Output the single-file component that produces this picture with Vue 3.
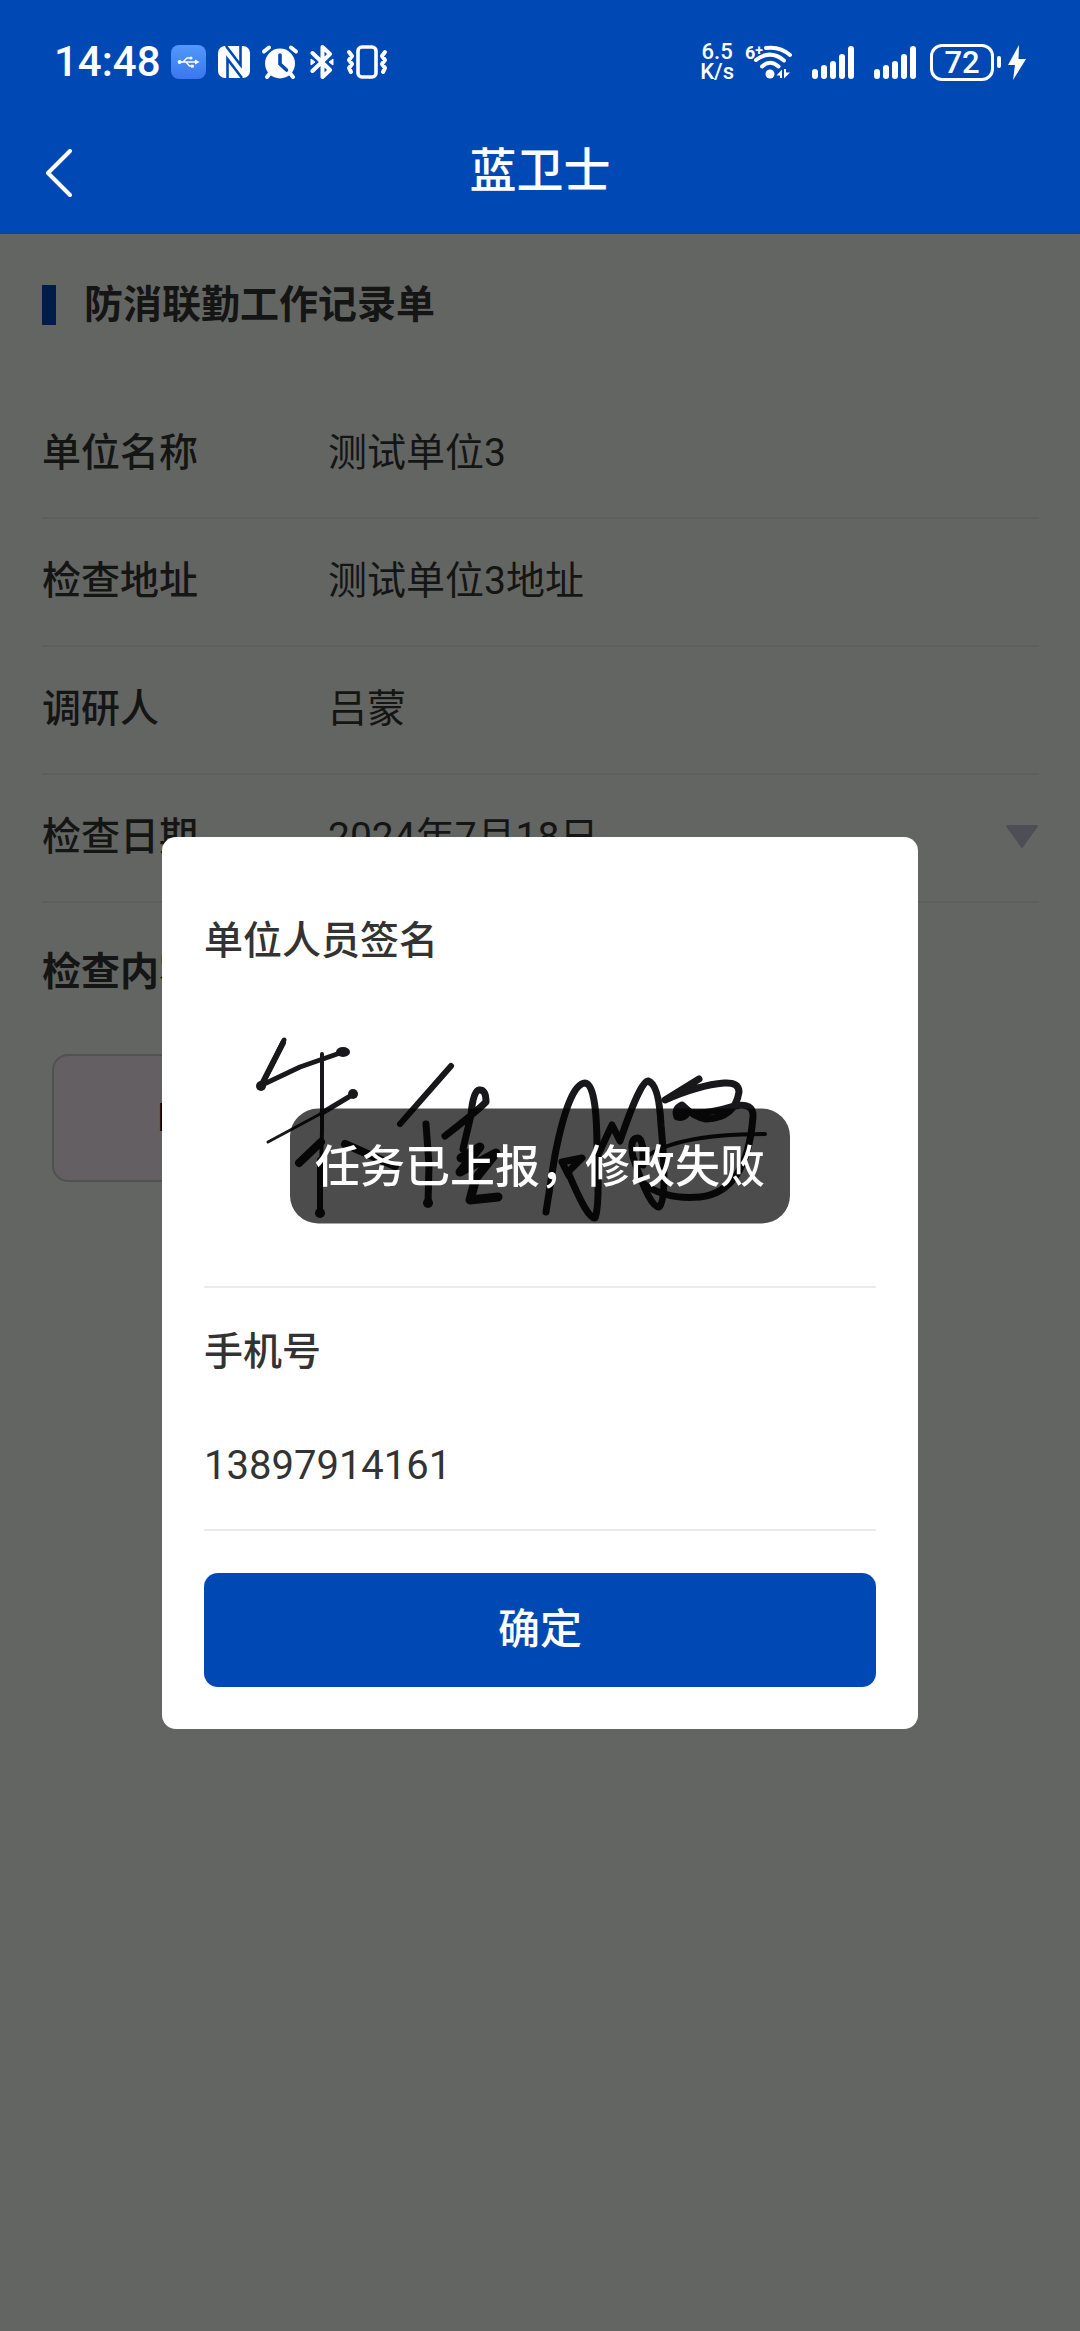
<script setup>
import { ref } from 'vue'

const rows = [
  { label: '单位名称', value: '测试单位3' },
  { label: '检查地址', value: '测试单位3地址' },
  { label: '调研人', value: '吕蒙' },
  { label: '检查日期', value: '2024年7月18日', select: true },
]
const phone = ref('13897914161')
const bars = [10, 14, 18, 25, 33]
</script>

<template>
  <div class="page">
    <header class="top">
      <div class="status">
        <div class="side">
          <time class="clock">14:48</time>
          <svg class="usb" width="35" height="34" viewBox="0 0 35 34">
            <defs>
              <linearGradient id="usbFill" x1="0" y1="0" x2="0" y2="1">
                <stop offset="0" stop-color="#5199fb" />
                <stop offset="1" stop-color="#3b76ee" />
              </linearGradient>
            </defs>
            <rect width="35" height="34" rx="8" fill="url(#usbFill)" />
            <g fill="none" stroke="#fff" stroke-width="1.4">
              <path d="M8 17H26M12 17L16 13H19M15 17L18.500 21H21" />
            </g>
            <circle cx="8.500" cy="17" r="1.900" fill="#fff" />
            <circle cx="20" cy="13" r="1.500" fill="#fff" />
            <rect x="20" y="19.800" width="2.800" height="2.800" fill="#fff" />
            <path d="M24 14.600L28.500 17L24 19.400Z" fill="#fff" />
          </svg>
          <svg class="nfc" width="32" height="32" viewBox="0 0 32 32">
            <rect width="32" height="32" rx="7" fill="#fff" />
            <g fill="none" stroke="#0049b5" stroke-width="2.600">
              <path d="M9.500 32V13L24 32" />
              <path d="M22.500 0V19L8 0" />
            </g>
          </svg>
          <svg class="alarm" width="36" height="34" viewBox="0 0 36 34">
            <circle cx="18" cy="18.500" r="15" fill="#fff" />
            <g stroke="#fff" stroke-width="4" stroke-linecap="round">
              <path d="M2 6.500L7 2.500M34 6.500L29 2.500M9 27L5 32M27 27L31 32" />
            </g>
            <path d="M18 10V19L24.500 25" fill="none" stroke="#0049b5" stroke-width="3.600" stroke-linecap="round" />
          </svg>
          <svg class="bt" width="24" height="34" viewBox="0 0 24 34">
            <path d="M2.500 8L20 25L12.500 32V2L20 9L2.500 26" fill="none" stroke="#fff" stroke-width="4" stroke-linejoin="round" stroke-linecap="round" />
            <path d="M1 14L5 17L1 20ZM23 14L19 17L23 20Z" fill="#fff" stroke="#fff" />
          </svg>
          <svg class="vib" width="42" height="34" viewBox="0 0 42 34">
            <rect x="12" y="2" width="18" height="30" rx="4" fill="none" stroke="#fff" stroke-width="3.600" />
            <path d="M3 7L6 11L3 15L6 19L3 23L5 27M39 7L36 11L39 15L36 19L39 23L37 27" fill="none" stroke="#fff" stroke-width="4" stroke-linejoin="round" stroke-linecap="round" />
          </svg>
        </div>
        <div class="side">
          <div class="speed">6.5<br />K/s</div>
          <div class="wifi">
            <span class="gen">6<sup>+</sup></span>
            <svg width="42" height="36" viewBox="-2 0 42 36">
              <g fill="none" stroke="#fff" stroke-width="4" stroke-linecap="round">
                <path d="M13 4Q27 2 37 11" />
                <path d="M3 16Q17 5 31 16.500" />
                <path d="M9 22.500Q17 15 25.500 22.500" />
              </g>
              <circle cx="17" cy="30" r="4.500" fill="#fff" />
              <path d="M29 34V25.500L23.500 31.500H27V34ZM31 25V34.500L37 28.500H33V25Z" fill="#fff" />
            </svg>
          </div>
          <svg v-for="n in 2" :key="n" class="signal" width="43" height="34" viewBox="0 0 43 34">
            <rect v-for="(h, i) in bars" :key="i" :x="i * 9" :y="34 - h" width="6" :height="h" rx="3" fill="#fff" />
          </svg>
          <div class="battery">72</div>
          <i class="cap"></i>
          <svg class="bolt" width="18" height="35" viewBox="0 0 18 35">
            <path d="M11 0L0 20H7L5 35L18 14H10.500Z" fill="#fff" />
          </svg>
        </div>
      </div>
      <nav class="bar">
        <button class="back" aria-label="返回">
          <svg width="30" height="48" viewBox="0 0 30 48">
            <path d="M26 2L4 24L26 46" fill="none" stroke="#fff" stroke-width="4" stroke-linecap="round" stroke-linejoin="round" />
          </svg>
        </button>
        <h1>蓝卫士</h1>
      </nav>
    </header>

    <main class="body">
      <h2 class="section">防消联勤工作记录单</h2>
      <dl class="rows">
        <div v-for="row in rows" :key="row.label" class="row">
          <dt>{{ row.label }}</dt>
          <dd>{{ row.value }}</dd>
          <svg v-if="row.select" width="34" height="24" viewBox="0 0 34 24">
            <path d="M2 1H32L17 22Z" fill="#4e4e56" stroke="#4e4e56" stroke-width="2" stroke-linejoin="round" />
          </svg>
        </div>
      </dl>
      <h3 class="content-title">检查内容</h3>
      <button class="option">PDF</button>

      <div class="mask">
        <form class="modal" @submit.prevent>
          <h4>单位人员签名</h4>
          <div class="sign">
            <svg width="672" height="232" viewBox="204 995 672 232" role="img" aria-label="签名">
              <g fill="none" stroke="#18181a" stroke-width="5" stroke-linecap="round" stroke-linejoin="round">
                <path d="M284 1040L262 1085L300 1067L340 1053" />
                <path d="M283 1043L262 1084" stroke-width="6" />
                <path d="M322 1054L322 1130L320 1210" stroke-width="4" />
                <path d="M320 1160V1210" stroke-width="6" />
                <path d="M268 1142L322 1113L352 1095" stroke-width="3" />
                <path d="M322 1113L352 1095" />
                <path d="M321 1142L299 1163M345 1144L395 1166" stroke-width="8" />
                <path d="M451 1066L400 1124" stroke-width="6" />
                <path d="M426 1124L429 1165L428 1203" stroke-width="7" />
                <path d="M445 1136Q476 1112 486 1102Q486 1089 479 1090Q473 1091 471 1115L463 1149" stroke-width="7" />
                <path d="M461 1158L480 1147L460 1172L496 1153L476 1178L470 1200L498 1197" stroke-width="9" />
                <path d="M546 1212L555 1155Q569 1084 585 1083Q597 1084 597 1150Q600 1205 595 1218Q588 1220 568 1172L582 1158L562 1162L569 1176" stroke-width="7" />
                <path d="M598 1155L612 1125L620 1141Q640 1082 648 1081Q659 1084 661 1125Q668 1200 659 1207Q650 1208 633 1157Q629 1138 638 1138Q644 1139 643 1165" stroke-width="7" />
                <path d="M699 1079L665 1100Q699 1085 724 1083Q739 1082 739 1092Q735 1118 706 1119Q694 1117 682 1105Q674 1109 677 1117Q684 1119 688 1112Q705 1115 734 1106Q754 1102 753 1117Q747 1192 700 1197Q666 1200 644 1184" stroke-width="7" />
                <path d="M640 1162Q668 1134 765 1134" stroke-width="4" />
              </g>
              <g fill="#18181a">
                <circle cx="261" cy="1086" r="5" />
                <ellipse cx="343" cy="1052" rx="7" ry="5" />
                <circle cx="353" cy="1094" r="5" />
                <circle cx="320" cy="1213" r="5" />
                <circle cx="428" cy="1203" r="5" />
                <circle cx="681" cy="1112" r="7" />
              </g>
            </svg>
          </div>
          <label for="phone">手机号</label>
          <input id="phone" v-model="phone" type="tel" />
          <button class="confirm" type="submit">确定</button>
        </form>
      </div>
    </main>

    <div class="toast" role="status">任务已上报，修改失败</div>
  </div>
</template>

<style>
body {
  margin: 0;
}
</style>

<style scoped>
.page {
  min-height: 100vh;
  display: flex;
  flex-direction: column;
  background: #636562;
  color: #141514;
  font: 400 39px/56px Roboto, "Noto Sans CJK SC", sans-serif;
}
h1, h2, h3, h4, dl, dd {
  margin: 0;
}
button {
  font: inherit;
  border: 0;
  padding: 0;
}
.top {
  background: #0049b5;
  color: #fff;
}
.status {
  height: 108px;
  padding: 16px 54px 0;
  box-sizing: border-box;
  display: flex;
  justify-content: space-between;
  align-items: center;
}
.side {
  display: flex;
  align-items: center;
}
.clock {
  font-size: 42px;
  font-weight: 500;
  width: 117px;
}
.nfc, .alarm, .bt, .vib {
  margin-left: 12px;
}
.speed {
  text-align: center;
  font-size: 22px;
  line-height: 20px;
  font-weight: 500;
}
.wifi {
  display: flex;
  margin-left: 11px;
}
.gen {
  width: 6px;
  white-space: nowrap;
  font-size: 18px;
  line-height: 18px;
  font-weight: 700;
}
.gen sup {
  font-size: 14px;
  line-height: 0;
  vertical-align: 4px;
}
.signal {
  margin-left: 19px;
}
.battery {
  margin-left: 13px;
  width: 58px;
  height: 31px;
  border: 3px solid #fff;
  border-radius: 12px;
  text-align: center;
  font-size: 31px;
  line-height: 32px;
  font-weight: 500;
}
.cap {
  width: 4px;
  height: 12px;
  margin: 0 7px 0 3px;
  border-radius: 2px;
  background: #fff;
}
.bar {
  height: 126px;
  display: grid;
  grid-template-columns: 120px 1fr 120px;
  align-items: center;
}
.back {
  height: 126px;
  padding: 4px 0 0 44px;
  display: flex;
  align-items: center;
  background: none;
}
h1 {
  text-align: center;
  font-size: 47px;
  font-weight: 500;
}
.body {
  flex: 1;
  position: relative;
  padding: 43px 41px 0 42px;
}
.section {
  display: flex;
  align-items: center;
  gap: 28px;
  font-size: 39px;
  font-weight: 700;
}
.section::before {
  content: "";
  width: 14px;
  height: 40px;
  background: #001d49;
}
.rows {
  margin-top: 58px;
}
.row {
  height: 128px;
  box-sizing: border-box;
  padding-bottom: 2px;
  border-bottom: 2px solid #5d5f5e;
  display: flex;
  align-items: center;
}
dt {
  width: 286px;
  font-weight: 500;
}
dd {
  flex: 1;
}
.content-title {
  margin-top: 41px;
  font-size: 39px;
  font-weight: 700;
}
.option {
  display: block;
  width: 282px;
  height: 128px;
  margin: 54px 10px 0;
  border: 2px solid #505250;
  border-radius: 16px;
  background: #635f63;
  color: #000;
}
.mask {
  position: absolute;
  inset: 0;
  display: flex;
  align-items: center;
  justify-content: center;
}
.modal {
  width: 70%;
  box-sizing: border-box;
  padding: 76px 42px 42px;
  border-radius: 14px;
  background: #fff;
  color: #333;
  display: flex;
  flex-direction: column;
}
h4 {
  font-size: 39px;
  font-weight: 500;
}
.sign {
  margin-top: 26px;
  padding-bottom: 59px;
  border-bottom: 2px solid #ebebeb;
}
.sign svg {
  display: block;
  width: 100%;
}
label {
  margin-top: 36px;
  font-weight: 500;
}
input {
  width: 100%;
  height: 124px;
  margin-top: 27px;
  box-sizing: border-box;
  padding: 0 0 4px;
  border: 0;
  border-bottom: 2px solid #ebebeb;
  background: none;
  font: inherit;
  font-size: 40px;
  color: inherit;
  outline: 0;
}
.confirm {
  height: 114px;
  margin-top: 42px;
  border-radius: 14px;
  background: #0049b5;
  color: #fff;
  font-size: 42px;
  font-weight: 500;
}
.toast {
  position: fixed;
  top: 50%;
  left: 50%;
  transform: translate(-50%, -50%);
  padding: 31px 25px 28px;
  border-radius: 28px;
  background: rgba(0, 0, 0, 0.7);
  color: #fff;
  font-size: 45px;
  font-weight: 500;
  white-space: nowrap;
}
</style>
